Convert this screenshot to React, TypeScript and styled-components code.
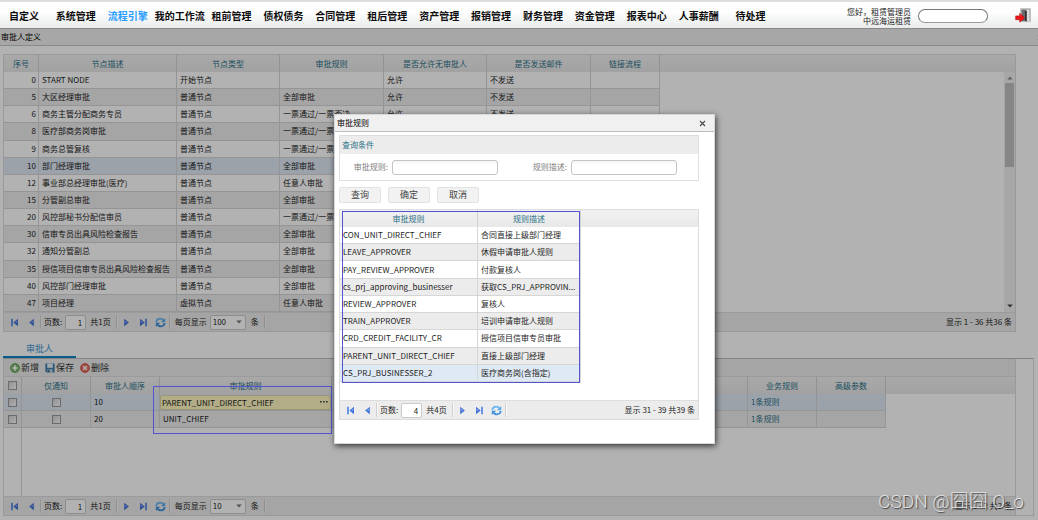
import React from 'react';
import styled, { createGlobalStyle, css } from 'styled-components';

const GlobalStyle = createGlobalStyle`
  * { box-sizing: border-box; }
  body {
    margin: 0;
    background: #fff;
    color: #1c1c1c;
    font-family: "Noto Sans CJK SC", "Open Sans", sans-serif;
    font-size: 8px;
    line-height: 12px;
  }
  button, input, select { font: inherit; color: inherit; margin: 0; }
`;

const Page = styled.div`
  display: flex;
  flex-direction: column;
  min-height: 100vh;
  overflow: hidden;
`;

/* ---------- top bar ---------- */

const TopBar = styled.header`
  display: flex;
  align-items: center;
  height: 29px;
  padding-top: 2px;
  border-top: 2px solid #dedede;
  border-bottom: 1px solid #8a8a8a;
  background: linear-gradient(#fff, #fdfdfd 40%, #e9eceb);
`;

const Nav = styled.nav`
  flex: 0 0 75%;
  display: grid;
  grid-template-columns: repeat(15, 1fr);
  margin-left: -2px;
`;

const NavLink = styled.a<{ $active?: boolean }>`
  font-size: 10px;
  line-height: 16px;
  font-weight: 700;
  text-align: center;
  white-space: nowrap;
  text-decoration: none;
  color: ${(p) => (p.$active ? '#2a9dff' : '#0c0c0c')};
`;

const UserArea = styled.div`
  flex: 1;
  display: flex;
  align-items: center;
  justify-content: flex-end;
  padding-right: 6px;
`;

const Greeting = styled.p`
  margin: 0 7px 0 0;
  text-align: right;
  line-height: 9px;
  white-space: nowrap;
`;

const SearchBox = styled.input`
  width: 70px;
  height: 14px;
  padding: 0 6px;
  border: 1px solid #777;
  border-bottom-color: #999;
  border-radius: 7px;
  background: #fff;
  outline: none;
`;

const ExitButton = styled.button`
  margin-left: 27px;
  padding: 0;
  border: 0;
  background: none;
  width: 17px;
  height: 16px;
  svg { display: block; }
`;

/* ---------- page body ---------- */

const Main = styled.main`
  position: relative;
  flex: 1;
  display: flex;
  flex-direction: column;
  padding-bottom: 4px;
`;

const TitleStrip = styled.div`
  display: flex;
  align-items: center;
  justify-content: space-between;
  height: 17px;
  padding-left: 1px;
  background: #f0f0f0;
  border-bottom: 1px solid #c4c4c4;
  color: #000;
`;

const CloseButton = styled.button`
  width: 12px;
  height: 12px;
  padding: 0;
  border: 0;
  background: none;
  svg { display: block; margin: auto; }
`;

const TabClose = styled(CloseButton)`
  margin-right: -8px;
`;

const Shell = styled.section`
  display: flex;
  flex-direction: column;
  border: 1px solid #dcdcdc;
  background: #fff;
`;

const NodeShell = styled(Shell)`
  margin: 8px 22px 0 3px;
`;

const headerFill = css`
  background: linear-gradient(#f2f2f2, #e8e8e8) no-repeat;
  background-size: 100% 17px;
`;

const GridArea = styled.div`
  display: flex;
  justify-content: space-between;
  ${headerFill}
`;

const Table = styled.table<{ $height?: number }>`
  table-layout: fixed;
  width: 0;
  height: ${(p) => (p.$height ? `${p.$height}px` : 'auto')};
  border-collapse: separate;
  border-spacing: 0;
`;

const Th = styled.th`
  height: 17px;
  padding: 0;
  font-weight: 400;
  color: #2b7187;
  white-space: nowrap;
  border-right: 1px solid #d2d2d2;
`;

const Row = styled.tr<{ $alt?: boolean; $selected?: boolean }>`
  background: ${(p) => (p.$selected ? '#dfe9f4' : p.$alt ? '#ececec' : '#fff')};
`;

const Td = styled.td<{ $align?: 'right' | 'center' }>`
  padding: 2px ${(p) => (p.$align === 'right' ? '2px' : '0')} 2px
    ${(p) => (p.$align ? '0' : '3px')};
  text-align: ${(p) => p.$align ?? 'left'};
  border-right: 1px solid #d6d6d6;
  border-bottom: 1px solid #d6d6d6;
  white-space: nowrap;
  overflow: hidden;
  text-overflow: ellipsis;
`;

const ScrollTrack = styled.div`
  display: flex;
  flex-direction: column;
  align-items: center;
  width: 11px;
  margin-top: 17px;
  padding: 4px 0;
  background: #f0f0f0;
  justify-content: space-between;
`;

const ScrollThumb = styled.div`
  width: 9px;
  height: 84px;
  margin: 3px 0 auto;
  background: #c1c1c1;
`;

/* ---------- pager ---------- */

const PagerBar = styled.div`
  display: flex;
  align-items: center;
  height: 19px;
  padding: 0 3px 0 2px;
  background: #ececec;
  border-top: 1px solid #dedede;
  white-space: nowrap;
`;

const PagerButton = styled.button`
  display: flex;
  align-items: center;
  justify-content: center;
  width: 17px;
  height: 16px;
  padding: 0;
  border: 0;
  background: none;
`;

const Divider = styled.span`
  width: 2px;
  height: 14px;
  border-left: 1px solid #d0d0d0;
  border-right: 1px solid #f8f8f8;
`;

const PageLabel = styled.label`
  display: flex;
  align-items: center;
  gap: 3px;
  margin-left: 2px;
`;

const PageInput = styled.input`
  width: 21px;
  height: 15px;
  padding: 0 3px;
  text-align: right;
  border: 1px solid #cacaca;
  border-radius: 2px;
  background: #fff;
`;

const Total = styled.span`
  margin: 0 5px 0 4px;
`;

const SizeLabel = styled(PageLabel)`
  margin: 0 1px 0 4px;
`;

const SelectWrap = styled.span`
  display: grid;
  align-items: center;
  select, svg { grid-area: 1 / 1; }
  svg { justify-self: end; margin-right: 4px; pointer-events: none; }
`;

const SizeSelect = styled.select`
  appearance: none;
  width: 36px;
  height: 15px;
  padding: 0 2px;
  border: 1px solid #cacaca;
  border-radius: 2px;
  background: #fff;
`;

const Summary = styled.span`
  margin-left: auto;
`;

/* ---------- approver panel ---------- */

const TabList = styled.div`
  display: flex;
  height: 17px;
  margin: 9px 4px 0 3px;
`;

const Tab = styled.button`
  width: 73px;
  padding: 0;
  border: 0;
  border-bottom: 2px solid #0f86c8;
  background: none;
  color: #3a93cc;
  font-size: 9px;
  line-height: 14px;
`;

const Panel = styled.section`
  flex: 1;
  display: flex;
  margin: 0 4px 0 3px;
  padding-right: 17px;
  border: 1px solid #dcdcdc;
  border-top-color: #bcbcbc;
`;

const ApproverShell = styled.div`
  flex: 1;
  display: flex;
  flex-direction: column;
  border-right: 1px solid #dcdcdc;
`;

const Toolbar = styled.div`
  display: flex;
  align-items: center;
  gap: 6px;
  height: 18px;
  padding-left: 6px;
  background: #ececec;
  border-bottom: 1px solid #dedede;
`;

const ToolButton = styled.button`
  display: flex;
  align-items: center;
  gap: 1px;
  padding: 0;
  border: 0;
  background: none;
  font-size: 9px;
  line-height: 12px;
  color: #333;
`;

const Gutter = styled.div`
  flex: 1;
  width: 18px;
  border-right: 1px solid #d6d6d6;
`;

const Check = styled.input`
  appearance: none;
  display: block;
  width: 9px;
  height: 9px;
  margin: 0 auto;
  border: 1px solid #9a9a9a;
  background: linear-gradient(135deg, #d2d2d2, #fafafa);
`;

const RuleLink = styled.a`
  color: #2b7187;
  text-decoration: none;
`;

const EditorCell = styled(Td)`
  padding: 0;
`;

const Editor = styled.div`
  display: flex;
  align-items: center;
  height: 15px;
  background: #fff8c2;
  border: 1px solid #dcd6a4;
  border-radius: 2px;
`;

const EditorInput = styled.input`
  flex: 1;
  min-width: 0;
  height: 13px;
  padding: 0 1px;
  border: 0;
  background: none;
`;

const MoreButton = styled.button`
  display: flex;
  padding: 0 2px;
  border: 0;
  background: none;
`;

/* ---------- layers over the page ---------- */

const Mask = styled.div`
  position: absolute;
  inset: 0;
  background: rgba(0, 0, 0, 0.3);
`;

const Highlight = styled.div<{ $x: number; $y: number; $w: number; $h: number }>`
  position: absolute;
  left: ${(p) => p.$x}px;
  top: ${(p) => p.$y}px;
  width: ${(p) => p.$w}px;
  height: ${(p) => p.$h}px;
  border: 1px solid #5353d2;
  pointer-events: none;
`;

const Dialog = styled.div`
  position: absolute;
  left: 334px;
  top: 85px;
  width: 381px;
  padding-bottom: 23px;
  background: #fff;
  border: 1px solid #d8d8d8;
  box-shadow: 1px 2px 6px rgba(0, 0, 0, 0.7);
`;

const DialogTitle = styled.div`
  display: flex;
  align-items: center;
  justify-content: space-between;
  height: 17px;
  padding: 0 6px 0 2px;
  background: #f0f0f0;
  border-bottom: 1px solid #bdbdbd;
  color: #000;
`;

const DialogBody = styled.div`
  padding: 3px 15px 0 4px;
`;

const QueryBox = styled.section`
  border: 1px solid #dfdfdf;
`;

const QueryTitle = styled.h2`
  margin: 0;
  padding: 0 2px;
  height: 18px;
  line-height: 18px;
  font-size: 8px;
  font-weight: 400;
  color: #2b7187;
  background: #ececec;
`;

const QueryFields = styled.form`
  display: grid;
  grid-template-columns: 1fr 1fr;
  height: 26px;
  align-items: center;
`;

const Field = styled.label`
  display: flex;
  align-items: center;
  justify-content: flex-end;
  gap: 4px;
  padding-right: 21px;
  color: #808080;
`;

const TextInput = styled.input`
  width: 106px;
  height: 15px;
  border: 1px solid #c4c4c4;
  border-radius: 3px;
  background: linear-gradient(#f4f4f4, #fff 4px);
`;

const Actions = styled.div`
  display: flex;
  gap: 7px;
  margin: 6px 0;
`;

const ActionButton = styled.button`
  width: 42px;
  height: 16px;
  padding: 0;
  font-size: 9px;
  line-height: 14px;
  color: #444;
  border: 1px solid #e2e2e2;
  border-radius: 2px;
  background: #f2f2f2;
`;

const DialogPager = styled.div`
  margin-top: 18px;
`;

const Watermark = styled.div`
  position: absolute;
  right: 14px;
  bottom: 5px;
  font-family: Roboto, "Noto Sans CJK SC", sans-serif;
  font-size: 19px;
  font-weight: 300;
  line-height: 26px;
  color: rgba(235, 235, 235, 0.9);
  text-shadow: 1px 1px 1px rgba(40, 40, 40, 0.8);
  white-space: nowrap;
`;

/* ---------- icons ---------- */

const CloseIcon = () => (
  <svg width="7" height="7" viewBox="0 0 7 7">
    <path d="M1 1l5 5M6 1l-5 5" stroke="#4c4c4c" strokeWidth="1.2" />
  </svg>
);

const EdgeIcon = ({ flip }: { flip?: boolean }) => (
  <svg width="9" height="9" viewBox="0 0 9 9" transform={flip ? 'scale(-1 1)' : undefined}>
    <path d="M1 .8h1.9v7.4H1z" fill="#6390e6" />
    <path d="M8 .8v7.4L3.3 4.5z" fill="#3f70d6" />
    <path d="M7.3 2.4v2.2H4.7z" fill="#8db0f2" />
  </svg>
);

const StepIcon = ({ flip }: { flip?: boolean }) => (
  <svg width="9" height="9" viewBox="0 0 9 9" transform={flip ? 'scale(-1 1)' : undefined}>
    <path d="M6.8.8v7.4L2.1 4.5z" fill="#3f70d6" />
    <path d="M6.1 2.4v2.2H3.5z" fill="#8db0f2" />
  </svg>
);

const RefreshIcon = () => (
  <svg width="11" height="11" viewBox="0 0 11 11" fill="none">
    <path d="M1.3 5C1.6 2.6 3.3 1.7 5.2 1.7c1.4 0 2.4.6 3.1 1.3" stroke="#6ab6f2" strokeWidth="1.8" />
    <path d="M10.2 1v4.2H5.9z" fill="#58aaec" />
    <path d="M9.7 6c-.3 2.4-2 3.3-3.9 3.3-1.4 0-2.4-.6-3.1-1.3" stroke="#3c90de" strokeWidth="1.8" />
    <path d="M.8 10V5.8h4.3z" fill="#3c90de" />
  </svg>
);

const DownIcon = () => (
  <svg width="6" height="4" viewBox="0 0 6 4">
    <path d="M.3.4h5.4L3 3.6z" fill="#777" />
  </svg>
);

const ScrollArrow = ({ up }: { up?: boolean }) => (
  <svg width="6" height="4" viewBox="0 0 6 4">
    <path d={up ? 'M.3 3.5h5.4L3 .5z' : 'M.3.5h5.4L3 3.5z'} fill={up ? '#888' : '#444'} />
  </svg>
);

const AddIcon = () => (
  <svg width="10" height="10" viewBox="0 0 10 10">
    <circle cx="5" cy="5" r="4.5" fill="#78b86c" stroke="#4c9444" strokeWidth=".7" />
    <path d="M5 2.3v5.4M2.3 5h5.4" stroke="#fff" strokeWidth="1.6" />
  </svg>
);

const SaveIcon = () => (
  <svg width="10" height="10" viewBox="0 0 10 10">
    <path d="M.4.4h9.2v9.2H1.4l-1-1z" fill="#3f7fae" />
    <path d="M2.2.6h5.6v4.2H2.2z" fill="#e9f2f8" />
    <path d="M2.6 6.2h4.8v3.4H2.6z" fill="#c5d8e4" />
    <path d="M3.3 6.8h1.4v2.5H3.3z" fill="#24506e" />
  </svg>
);

const DeleteIcon = () => (
  <svg width="10" height="10" viewBox="0 0 10 10">
    <circle cx="5" cy="5" r="4.5" fill="#e66e64" stroke="#c4463e" strokeWidth=".7" />
    <path d="M3.2 3.2l3.6 3.6M6.8 3.2L3.2 6.8" stroke="#fff" strokeWidth="1.4" />
  </svg>
);

const DotsIcon = () => (
  <svg width="8" height="2" viewBox="0 0 8 2">
    <path d="M0 0h1.6v1.6H0zM3 0h1.6v1.6H3zM6 0h1.6v1.6H6z" fill="#444" />
  </svg>
);

const ExitIcon = () => (
  <svg width="17" height="16" viewBox="0 0 17 16">
    <path d="M5.5.7h10v13h-10z" fill="#9a9a9a" stroke="#c2c2c2" />
    <path d="M7 2h4.5v11H7z" fill="#6a6a6a" />
    <path d="M10 2l4.5-.4v12.2L10 13z" fill="#dcdcdc" />
    <path d="M10 2l1.8 1v10.6L10 13z" fill="#333" />
    <path d="M.7 7.9h4V5.4l5 4.4-5 4.4v-2.5h-4z" fill="#f01818" stroke="#b40808" strokeWidth=".6" />
  </svg>
);

/* ---------- data ---------- */

const navItems = [
  '自定义', '系统管理', '流程引擎', '我的工作流', '租前管理', '债权债务', '合同管理', '租后管理',
  '资产管理', '报销管理', '财务管理', '资金管理', '报表中心', '人事薪酬', '待处理',
];

type NodeRow = [number, string, string, string, string?, string?];

const ALL = '全部审批';
const VETO = '一票通过/一票否决';
const NORMAL = '普通节点';

const nodeRows: NodeRow[] = [
  [0, 'START NODE', '开始节点', '', '允许', '不发送'],
  [5, '大区经理审批', NORMAL, ALL, '允许', '不发送'],
  [6, '商务主管分配商务专员', NORMAL, VETO, '允许', '不发送'],
  [8, '医疗部商务岗审批', NORMAL, VETO],
  [9, '商务总管复核', NORMAL, VETO],
  [10, '部门经理审批', NORMAL, ALL],
  [12, '事业部总经理审批(医疗)', NORMAL, '任意人审批'],
  [15, '分管副总审批', NORMAL, ALL],
  [20, '风控部秘书分配信审员', NORMAL, VETO],
  [30, '信审专员出具风险检查报告', NORMAL, ALL],
  [32, '通知分管副总', NORMAL, ALL],
  [35, '授信项目信审专员出具风险检查报告', NORMAL, ALL],
  [40, '风控部门经理审批', NORMAL, ALL],
  [47, '项目经理', '虚拟节点', '任意人审批'],
];

const ruleRows = [
  ['CON_UNIT_DIRECT_CHIEF', '合同直接上级部门经理'],
  ['LEAVE_APPROVER', '休假申请审批人规则'],
  ['PAY_REVIEW_APPROVER', '付款复核人'],
  ['cs_prj_approving_businesser', '获取CS_PRJ_APPROVIN...'],
  ['REVIEW_APPROVER', '复核人'],
  ['TRAIN_APPROVER', '培训申请审批人规则'],
  ['CRD_CREDIT_FACILITY_CR', '授信项目信审专员审批'],
  ['PARENT_UNIT_DIRECT_CHIEF', '直接上级部门经理'],
  ['CS_PRJ_BUSINESSER_2', '医疗商务岗(含指定)'],
];

const Columns = ({ widths }: { widths: number[] }) => (
  <colgroup>
    {widths.map((w, i) => (
      <col key={i} width={w} />
    ))}
  </colgroup>
);

interface PagerProps {
  page: number;
  pages: number;
  size?: string;
  summary: string;
}

const Pager = ({ page, pages, size, summary }: PagerProps) => (
  <PagerBar>
    <PagerButton aria-label="首页"><EdgeIcon /></PagerButton>
    <PagerButton aria-label="上一页"><StepIcon /></PagerButton>
    <Divider />
    <PageLabel>
      页数:
      <PageInput defaultValue={page} />
    </PageLabel>
    <Total>共{pages}页</Total>
    <Divider />
    <PagerButton aria-label="下一页"><StepIcon flip /></PagerButton>
    <PagerButton aria-label="末页"><EdgeIcon flip /></PagerButton>
    <PagerButton aria-label="刷新"><RefreshIcon /></PagerButton>
    <Divider />
    {size && (
      <>
        <SizeLabel>
          每页显示
          <SelectWrap>
            <SizeSelect defaultValue={size}>
              <option>{size}</option>
            </SizeSelect>
            <DownIcon />
          </SelectWrap>
        </SizeLabel>
        <Total>条</Total>
        <Divider />
      </>
    )}
    <Summary>{summary}</Summary>
  </PagerBar>
);

const GridSpace = styled.div`
  flex: 1;
  margin-top: 17px;
  background: #fff;
`;

const NodeGrid = () => (
  <NodeShell>
    <GridArea>
      <Table $height={257}>
        <Columns widths={[35, 138, 103, 104, 103, 104, 69]} />
        <thead>
          <tr>
            {['序号', '节点描述', '节点类型', '审批规则', '是否允许无审批人', '是否发送邮件', '链接流程'].map((h) => (
              <Th key={h}>{h}</Th>
            ))}
          </tr>
        </thead>
        <tbody>
          {nodeRows.map(([no, name, type, rule, empty, mail], i) => (
            <Row key={no} $alt={i % 2 === 1} $selected={no === 10}>
              <Td $align="right">{no}</Td>
              <Td>{name}</Td>
              <Td>{type}</Td>
              <Td>{rule}</Td>
              <Td>{empty}</Td>
              <Td>{mail}</Td>
              <Td />
            </Row>
          ))}
        </tbody>
      </Table>
      <GridSpace />
      <ScrollTrack>
        <ScrollArrow up />
        <ScrollThumb />
        <ScrollArrow />
      </ScrollTrack>
    </GridArea>
    <Pager page={1} pages={1} size="100" summary="显示 1 - 36 共36 条" />
  </NodeShell>
);

const ApproverGrid = () => (
  <Panel>
    <ApproverShell>
      <Toolbar>
        <ToolButton><AddIcon />新增</ToolButton>
        <ToolButton><SaveIcon />保存</ToolButton>
        <ToolButton><DeleteIcon />删除</ToolButton>
      </Toolbar>
      <GridArea>
        <Table>
          <Columns widths={[18, 69, 69, 172, 416, 69, 69]} />
          <thead>
            <tr>
              <Th><Check type="checkbox" aria-label="全选" /></Th>
              <Th>仅通知</Th>
              <Th>审批人顺序</Th>
              <Th>审批规则</Th>
              <Th />
              <Th>业务规则</Th>
              <Th>高级参数</Th>
            </tr>
          </thead>
          <tbody>
            <Row $selected>
              <Td $align="center"><Check type="checkbox" aria-label="选择 10" /></Td>
              <Td $align="center"><Check type="checkbox" aria-label="仅通知 10" /></Td>
              <Td>10</Td>
              <EditorCell>
                <Editor>
                  <EditorInput aria-label="审批规则" defaultValue="PARENT_UNIT_DIRECT_CHIEF" />
                  <MoreButton aria-label="选择审批规则"><DotsIcon /></MoreButton>
                </Editor>
              </EditorCell>
              <Td />
              <Td><RuleLink href="#">1条规则</RuleLink></Td>
              <Td />
            </Row>
            <Row $alt>
              <Td $align="center"><Check type="checkbox" aria-label="选择 20" /></Td>
              <Td $align="center"><Check type="checkbox" aria-label="仅通知 20" /></Td>
              <Td>20</Td>
              <Td>UNIT_CHIEF</Td>
              <Td />
              <Td><RuleLink href="#">1条规则</RuleLink></Td>
              <Td />
            </Row>
          </tbody>
        </Table>
      </GridArea>
      <Gutter />
      <Pager page={1} pages={1} size="10" summary="显示 1 - 2 共2 条" />
    </ApproverShell>
  </Panel>
);

const RuleDialog = () => (
  <Dialog role="dialog" aria-label="审批规则">
    <DialogTitle>
      审批规则
      <CloseButton aria-label="关闭"><CloseIcon /></CloseButton>
    </DialogTitle>
    <DialogBody>
      <QueryBox>
        <QueryTitle>查询条件</QueryTitle>
        <QueryFields>
          <Field>审批规则:<TextInput /></Field>
          <Field>规则描述:<TextInput /></Field>
        </QueryFields>
      </QueryBox>
      <Actions>
        <ActionButton>查询</ActionButton>
        <ActionButton>确定</ActionButton>
        <ActionButton>取消</ActionButton>
      </Actions>
      <Shell>
        <GridArea>
          <Table $height={172}>
            <Columns widths={[138, 103]} />
            <thead>
              <tr>
                <Th>审批规则</Th>
                <Th>规则描述</Th>
              </tr>
            </thead>
            <tbody>
              {ruleRows.map(([code, desc], i) => (
                <Row key={code} $alt={i % 2 === 1} $selected={i === 8}>
                  <Td>{code}</Td>
                  <Td>{desc}</Td>
                </Row>
              ))}
            </tbody>
          </Table>
          <GridSpace />
        </GridArea>
        <DialogPager>
          <Pager page={4} pages={4} summary="显示 31 - 39 共39 条" />
        </DialogPager>
      </Shell>
    </DialogBody>
  </Dialog>
);

export default function App() {
  return (
    <Page>
      <GlobalStyle />
      <TopBar>
        <Nav>
          {navItems.map((item) => (
            <NavLink key={item} href="#" $active={item === '流程引擎'}>{item}</NavLink>
          ))}
        </Nav>
        <UserArea>
          <Greeting>您好，租赁管理员<br />中远海运租赁</Greeting>
          <SearchBox aria-label="搜索" />
          <ExitButton aria-label="退出"><ExitIcon /></ExitButton>
        </UserArea>
      </TopBar>
      <Main>
        <TitleStrip>
          审批人定义
          <TabClose aria-label="关闭页签"><CloseIcon /></TabClose>
        </TitleStrip>
        <NodeGrid />
        <TabList role="tablist">
          <Tab role="tab" aria-selected="true">审批人</Tab>
        </TabList>
        <ApproverGrid />
        <Mask />
        <Highlight $x={153} $y={357} $w={179} $h={48} />
        <RuleDialog />
        <Highlight $x={342} $y={182} $w={238} $h={172} />
        <Watermark>CSDN @囧囧 O_o</Watermark>
      </Main>
    </Page>
  );
}
